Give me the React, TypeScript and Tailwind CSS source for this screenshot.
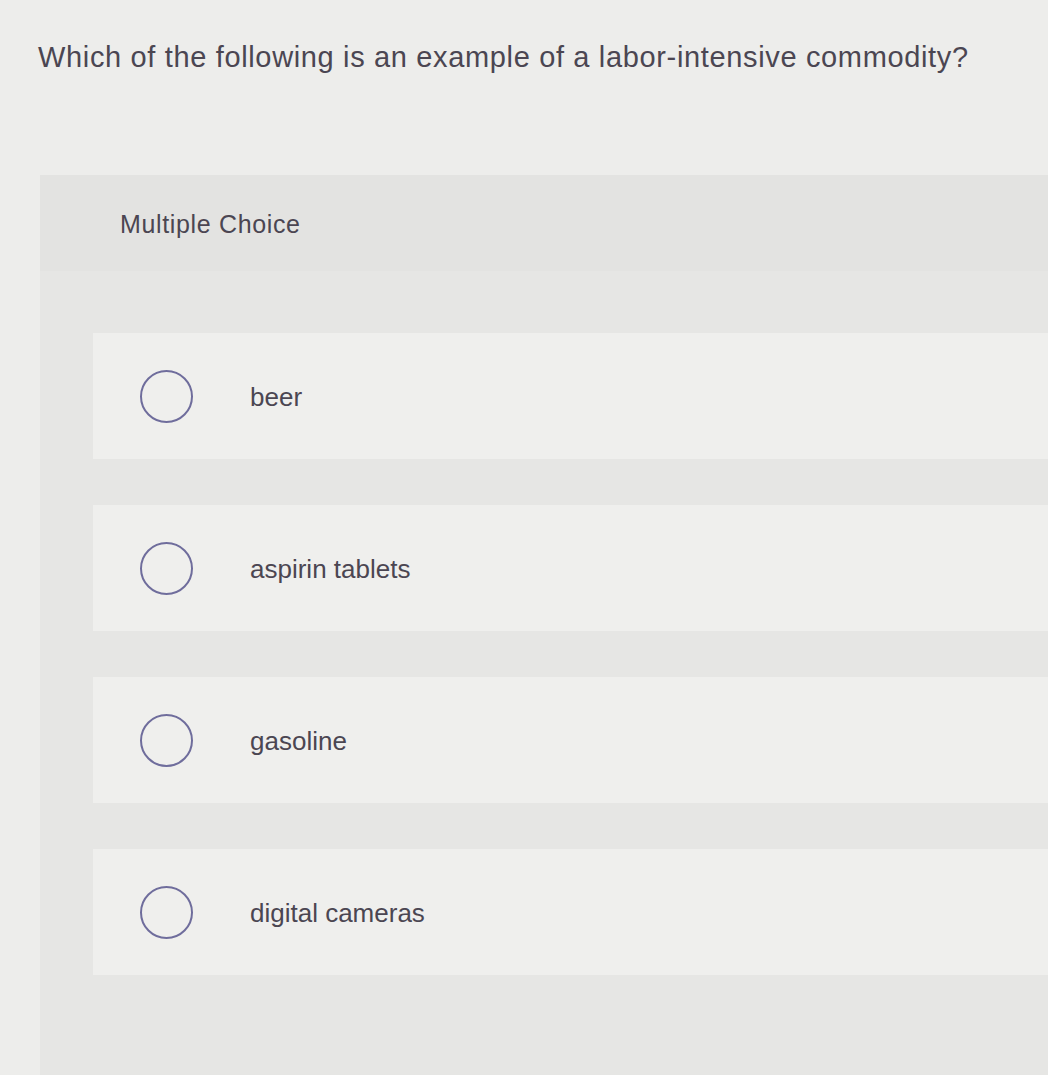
const options = ['beer', 'aspirin tablets', 'gasoline', 'digital cameras'];

function Radio() {
  return (
    <span className="block h-[53px] w-[53px] shrink-0 rounded-full border-2 border-[#6f6d9c]" />
  );
}

export default function App() {
  return (
    <div
      className="min-h-[1075px] w-full overflow-hidden bg-[#ededeb] text-[#4b4652]"
      style={{ fontFamily: '"Liberation Sans", Arial, sans-serif' }}
    >
      <h1 className="pl-[38px] pt-[38px] text-[29px] leading-[38px] tracking-[0.65px]">
        Which of the following is an example of a labor-intensive commodity?
      </h1>

      <div className="ml-[40px] mt-[99px] min-h-[900px] bg-[#e6e6e4] pb-[100px]">
        <div className="flex h-[96px] items-center bg-[#e3e3e1] pl-[80px] pt-[4px] text-[25px] tracking-[0.65px]">
          Multiple Choice
        </div>

        <div className="flex flex-col gap-[46px] pl-[53px] pt-[62px]">
          {options.map((label) => (
            <div key={label} className="flex h-[126px] items-center bg-[#efefed] pl-[47px]">
              <Radio />
              <span className="ml-[57px] pt-[3px] text-[26px]">{label}</span>
            </div>
          ))}
        </div>
      </div>
    </div>
  );
}
